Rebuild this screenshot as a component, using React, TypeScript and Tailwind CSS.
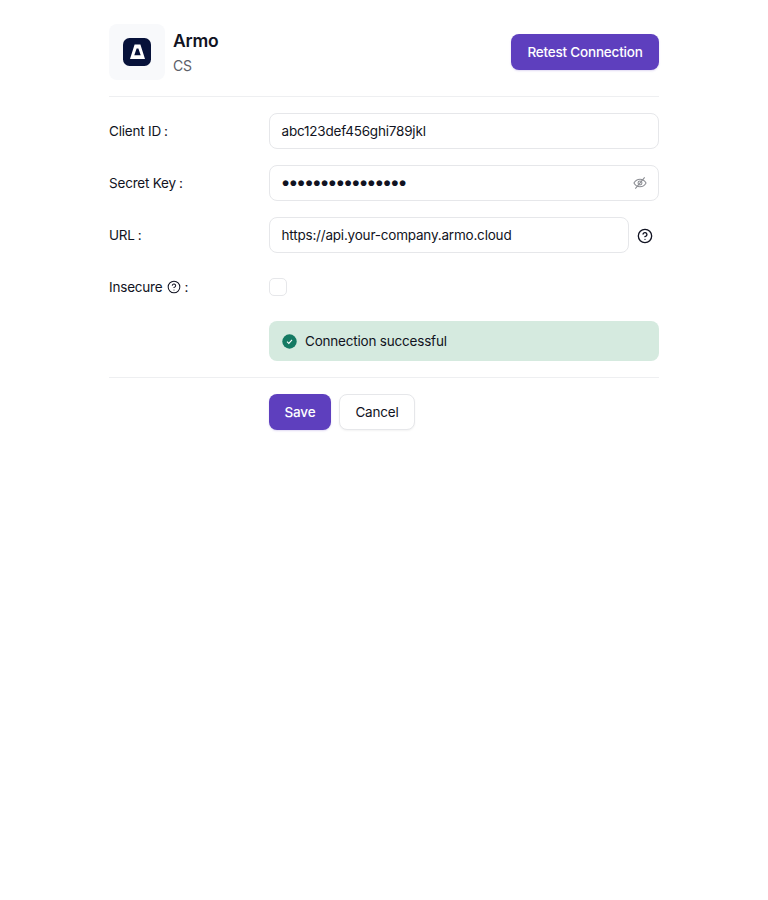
import { CircleHelp } from "lucide-react";

function ArmoLogo() {
    return (
        <svg width="28" height="28" viewBox="0 0 28 28">
            <rect width="28" height="28" rx="6.5" fill="#07123a" />
            <path fillRule="evenodd" d="M11.6 6.6h5.8L22 21H7L11.6 6.6ZM13.6 10.6l-2.3 6.6h6.4l-2.3-6.6h-1.8Z" fill="#fff" />
        </svg>
    );
}

function EyeSlash() {
    return (
        <svg width="14" height="14" viewBox="0 0 15 15" fill="none" stroke="#8a8c92" strokeWidth="1.1">
            <path d="M1 7.5C2.5 4.8 4.8 3.4 7.5 3.4s5 1.4 6.5 4.1c-1.5 2.7-3.8 4.1-6.5 4.1S2.5 10.2 1 7.5Z" />
            <circle cx="7.5" cy="7.5" r="2.1" />
            <path d="M2.5 13.5 12.5 1.5" />
        </svg>
    );
}

function Label({ text }: { text: string }) {
    return (
        <label className="w-40 shrink-0 text-[13.5px]">
            {text}
            <span className="ml-[3px]">:</span>
        </label>
    );
}

export default function App() {
    return (
        <div className="min-h-[900px] bg-white font-['Inter',sans-serif] tracking-[-0.2px] text-[#111322]">
            <div className="mx-auto flex w-[550px] flex-col pt-6">
                {/* Header */}
                <div className="flex items-start justify-between border-b border-[#eeeff1] pb-4">
                    <div className="flex gap-2">
                        <div className="flex h-14 w-14 items-center justify-center rounded-lg bg-[#f8f9fb]">
                            <ArmoLogo />
                        </div>
                        <div className="flex flex-col pt-[5px]">
                            <span className="text-[17.5px] leading-6 font-semibold">Armo</span>
                            <span className="mt-[3px] text-sm leading-5 text-[#5d6068]">CS</span>
                        </div>
                    </div>
                    <button className="mt-2.5 h-9 w-[148px] rounded-lg bg-[#5e3fbe] text-[13.5px] font-medium text-white shadow-[0_1px_2px_rgba(94,63,190,0.2)]">
                        Retest Connection
                    </button>
                </div>

                {/* Form */}
                <div className="flex flex-col gap-4 pt-4">
                    <div className="flex items-center">
                        <Label text="Client ID" />
                        <div className="flex h-9 flex-1 items-center rounded-lg border border-[#e6e7ea] px-[11.5px] text-[13.5px]">
                            abc123def456ghi789jkl
                        </div>
                    </div>
                    <div className="flex items-center">
                        <Label text="Secret Key" />
                        <div className="flex h-9 flex-1 items-center justify-between rounded-lg border border-[#e6e7ea] px-[11.5px] text-[13.5px]">
                            <span className="font-['Liberation_Sans',sans-serif] tracking-[-0.35px]">●●●●●●●●●●●●●●●●</span>
                            <EyeSlash />
                        </div>
                    </div>
                    <div className="flex items-center">
                        <Label text="URL" />
                        <div className="flex h-9 w-[360px] items-center rounded-lg border border-[#e6e7ea] px-[11.5px] text-[13.5px]">
                            https://api.your-company.armo.cloud
                        </div>
                        <CircleHelp size={16} strokeWidth={2} className="mt-0.5 ml-2 text-[#111322]" />
                    </div>
                    <div className="flex h-9 items-center">
                        <label className="flex w-40 shrink-0 items-center gap-[5px] text-[13.5px]">
                            Insecure
                            <CircleHelp size={14} strokeWidth={1.75} />
                            <span className="-ml-0.5">:</span>
                        </label>
                        <div className="h-[18px] w-[18px] rounded-[5px] border border-[#e6e7ea]" />
                    </div>
                    <div className="ml-40 flex h-10 items-center gap-2 rounded-lg bg-[#d5eadf] pr-3 pl-[13px] text-[13.5px]">
                        <svg width="15" height="15" viewBox="0 0 15 15">
                            <circle cx="7.5" cy="7.5" r="7.2" fill="#157a63" />
                            <path d="M5 7.7 6.8 9.4 10 5.9" fill="none" stroke="#fff" strokeWidth="1.1" />
                        </svg>
                        Connection successful
                    </div>
                </div>

                {/* Actions */}
                <div className="mt-4 flex gap-2 border-t border-[#eeeff1] pt-4 pl-40">
                    <button className="h-9 w-[62px] rounded-lg bg-[#5e3fbe] text-[13.5px] font-medium text-white shadow-[0_1px_2px_rgba(94,63,190,0.2)]">
                        Save
                    </button>
                    <button className="h-9 w-[76px] rounded-lg border border-[#e6e7ea] bg-white text-[13.5px] shadow-[0_1px_2px_rgba(0,0,0,0.05)]">
                        Cancel
                    </button>
                </div>
            </div>
        </div>
    );
}
